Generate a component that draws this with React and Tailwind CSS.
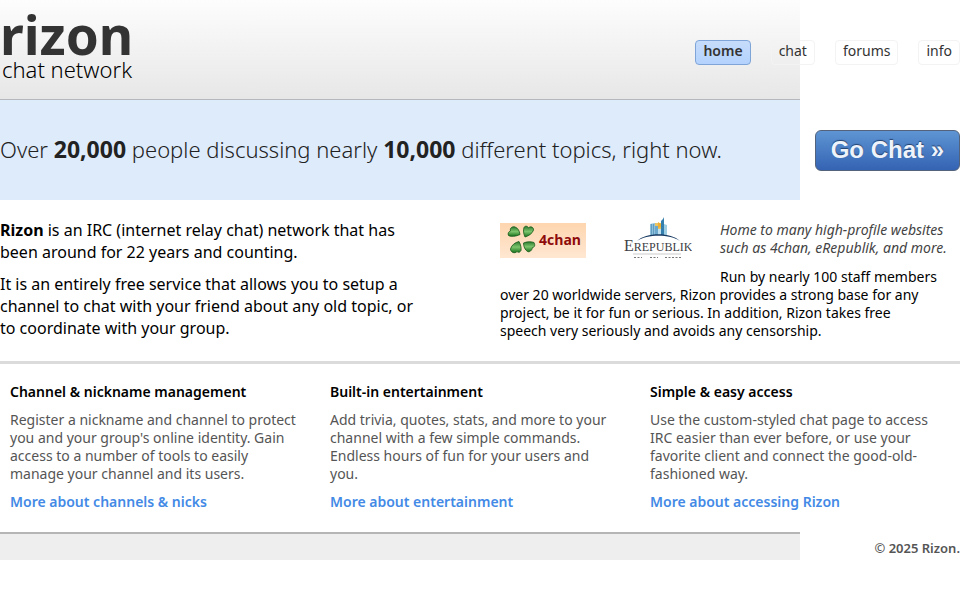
const navItems = ["home", "chat", "forums", "info"];

const features = [
  {
    title: "Channel & nickname management",
    lines: [
      "Register a nickname and channel to protect",
      "you and your group's online identity. Gain",
      "access to a number of tools to easily",
      "manage your channel and its users.",
    ],
    link: "More about channels & nicks",
  },
  {
    title: "Built-in entertainment",
    lines: [
      "Add trivia, quotes, stats, and more to your",
      "channel with a few simple commands.",
      "Endless hours of fun for your users and",
      "you.",
    ],
    link: "More about entertainment",
  },
  {
    title: "Simple & easy access",
    lines: [
      "Use the custom-styled chat page to access",
      "IRC easier than ever before, or use your",
      "favorite client and connect the good-old-",
      "fashioned way.",
    ],
    link: "More about accessing Rizon",
  },
];

function Lines({ lines }) {
  return lines.map((line, i) => (
    <span key={i} className="block whitespace-nowrap">
      {line}
    </span>
  ));
}

function FourChanLogo() {
  return (
    <svg viewBox="0 0 86 35" className="h-[35px] w-[86px]" role="img" aria-label="4chan">
      <defs>
        <linearGradient id="peach" x1="0" y1="0" x2="0" y2="1">
          <stop offset="0" stopColor="#fed6af" />
          <stop offset="1" stopColor="#ffe7d2" />
        </linearGradient>
        <linearGradient id="leaf" x1="0" y1="0" x2="0" y2="1">
          <stop offset="0" stopColor="#2c7a30" />
          <stop offset="0.5" stopColor="#7cc46c" />
          <stop offset="1" stopColor="#17701c" />
        </linearGradient>
      </defs>
      <rect width="86" height="35" fill="url(#peach)" />
      <g fill="url(#leaf)" stroke="#17591b" strokeWidth="0.8">
        <path d="M20 11.500C16 13.500 10.500 14 8.500 12.500C7.500 10.500 8.500 8.500 10.500 8C9.500 5 12.500 3 15 4C18 5 19.500 8 20 11.500Z" />
        <path d="M25 14C23.500 11 23 7 24 4.500C25 2.500 28 3 28.500 5C30.500 2.500 34 4.500 33.500 7C32.500 10.500 28.500 13 25 14Z" />
        <path d="M19 18.500C20.500 21 21.500 25 21 27.500C19.500 30 18 29.500 17 28.500C15 31 10.500 29.500 10.500 26C11.500 22 15 19.500 19 18.500Z" />
        <path d="M23.500 20C26.500 18.500 31.500 18.500 34 19.500C35.500 22 34.500 24.500 32.500 24.500C32 27.500 29.500 29.500 27.500 28.500C25 27 23.500 23.500 23.500 20Z" />
      </g>
      <text x="39" y="22" fill="#8e0b0b" fontFamily="'Open Sans', sans-serif" fontSize="14" fontWeight="700">
        4chan
      </text>
    </svg>
  );
}

function ErepublikLogo() {
  return (
    <svg viewBox="0 0 68 42" className="h-[42px] w-[68px]" role="img" aria-label="eRepublik">
      <path d="M26 7L31 6V18L26 19Z" fill="#8fc0dc" />
      <path d="M27.500 7V18M29.500 7V18" stroke="#4d8eb5" strokeWidth="0.7" />
      <path d="M31 6H38V17H31Z" fill="#e9c663" />
      <path d="M31 9H34V18H31Z" fill="#6ba8cc" />
      <path d="M34 5L37 7V10L34 11Z" fill="#f2b032" />
      <path d="M37 4L39 2L39.500 0L40 2V18H37Z" fill="#347fae" />
      <path d="M40 7L43 8V19L40 18Z" fill="#9fcde2" />
      <path d="M34 12H37V18H34Z" fill="#bfe0ee" />
      <path d="M13 24C22 15 47 15 56 24C46 17 23 17 13 24Z" fill="#173a63" />
      <text x="0" y="34" fill="#3d4045" fontFamily="'Liberation Serif', serif" fontSize="16">
        E<tspan fontSize="12">REPUBLIK</tspan>
      </text>
      <path d="M9 37H57" stroke="#aaa" strokeWidth="0.6" />
      <path d="M10 40.500H18M26 40.500H34M41 40.500H58" stroke="#777" strokeWidth="1" strokeDasharray="2 1.500" />
    </svg>
  );
}

export default function App() {
  return (
    <div className="bg-white font-['Noto_Sans','Open_Sans',sans-serif] text-sm leading-[18px] text-black">
      <header className="grid">
        <div className="col-start-1 row-start-1 h-[100px] w-5/6 border-b border-[#b4b8bc] bg-linear-to-b from-[#fdfdfd] to-[#e7e7e7]" />
        <div className="z-10 col-start-1 row-start-1 flex items-start justify-between">
          <a href="#" className="block pt-3 whitespace-nowrap">
            <span className="block text-[53px] leading-[46px] font-bold text-[#333]">rizon</span>
            <span className="block pl-[2px] text-[22px] leading-[22px] font-light">chat network</span>
          </a>
          <nav className="flex gap-5 pt-10">
            {navItems.map((item) => (
              <a
                key={item}
                href="#"
                className={
                  item === "home"
                    ? "rounded border border-[#7fa5d8] bg-linear-to-b from-[#c6dcfa] to-[#b3d2fd] px-[7px] pt-px pb-1 font-semibold text-[#333]"
                    : "rounded border border-[#f3f3f3] px-[7px] pt-px pb-1 text-[#333]"
                }
              >
                {item}
              </a>
            ))}
          </nav>
        </div>
      </header>

      <section className="grid">
        <div className="col-start-1 row-start-1 h-[100px] w-5/6 bg-[#deebfb]" />
        <div className="z-10 col-start-1 row-start-1 flex items-center justify-between">
          <p className="pb-[2px] text-[22px] leading-[28px] font-light whitespace-nowrap text-[#222]">
            Over <strong className="text-[23px] font-bold">20,000</strong> people discussing nearly{" "}
            <strong className="text-[23px] font-bold">10,000</strong> different topics, right now.
          </p>
          <button
            type="button"
            className="h-[41px] rounded-md border border-[#53637c] bg-linear-to-b from-[#5f95d3] to-[#3463b3] px-[15px] font-['Liberation_Sans',Arial,sans-serif] text-2xl font-bold whitespace-nowrap text-[#eef3fb] [text-shadow:0_-1px_1px_#24406c]"
          >
            Go Chat »
          </button>
        </div>
      </section>

      <main>
        <section className="grid grid-cols-[25fr_23fr] border-b-[3px] border-[#dbdbdb] pt-4 pb-[21px]">
          <div className="space-y-[10px] pt-[3px] text-base leading-[22px]">
            <p>
              <strong className="font-bold">Rizon</strong>
              <span className="whitespace-nowrap"> is an IRC (internet relay chat) network that has</span>
              <Lines lines={["been around for 22 years and counting."]} />
            </p>
            <p>
              <Lines
                lines={[
                  "It is an entirely free service that allows you to setup a",
                  "channel to chat with your friend about any old topic, or",
                  "to coordinate with your group.",
                ]}
              />
            </p>
          </div>
          <div>
            <div className="float-left flex h-[68px] w-[220px] items-start">
              <div className="w-[124px] pt-[7px]">
                <FourChanLogo />
              </div>
              <div className="pt-px">
                <ErepublikLogo />
              </div>
            </div>
            <p className="pt-[5px] pb-[11px] whitespace-nowrap text-[#444] italic">
              Home to many high-profile websites
              <br />
              such as 4chan, eRepublik, and more.
            </p>
            <p className="whitespace-nowrap">
              Run by nearly 100 staff members
              <br />
              over 20 worldwide servers, Rizon provides a strong base for any
              <br />
              project, be it for fun or serious. In addition, Rizon takes free
              <br />
              speech very seriously and avoids any censorship.
            </p>
          </div>
        </section>

        <section className="grid grid-cols-3 pt-[19px] pb-[21px]">
          {features.map((f) => (
            <article key={f.title} className="space-y-[10px] pl-[10px]">
              <h2 className="font-semibold whitespace-nowrap">{f.title}</h2>
              <p className="text-[#555]">
                <Lines lines={f.lines} />
              </p>
              <p>
                <a href="#" className="font-semibold whitespace-nowrap text-[#438ae6]">
                  {f.link}
                </a>
              </p>
            </article>
          ))}
        </section>
      </main>

      <footer className="grid">
        <div className="col-start-1 row-start-1 h-7 w-5/6 border-t-2 border-[#b5b5b5] bg-[#eee]" />
        <p className="z-10 col-start-1 row-start-1 pt-[7px] text-right text-[13px] font-semibold text-[#555]">
          © 2025 Rizon.
        </p>
      </footer>
    </div>
  );
}
